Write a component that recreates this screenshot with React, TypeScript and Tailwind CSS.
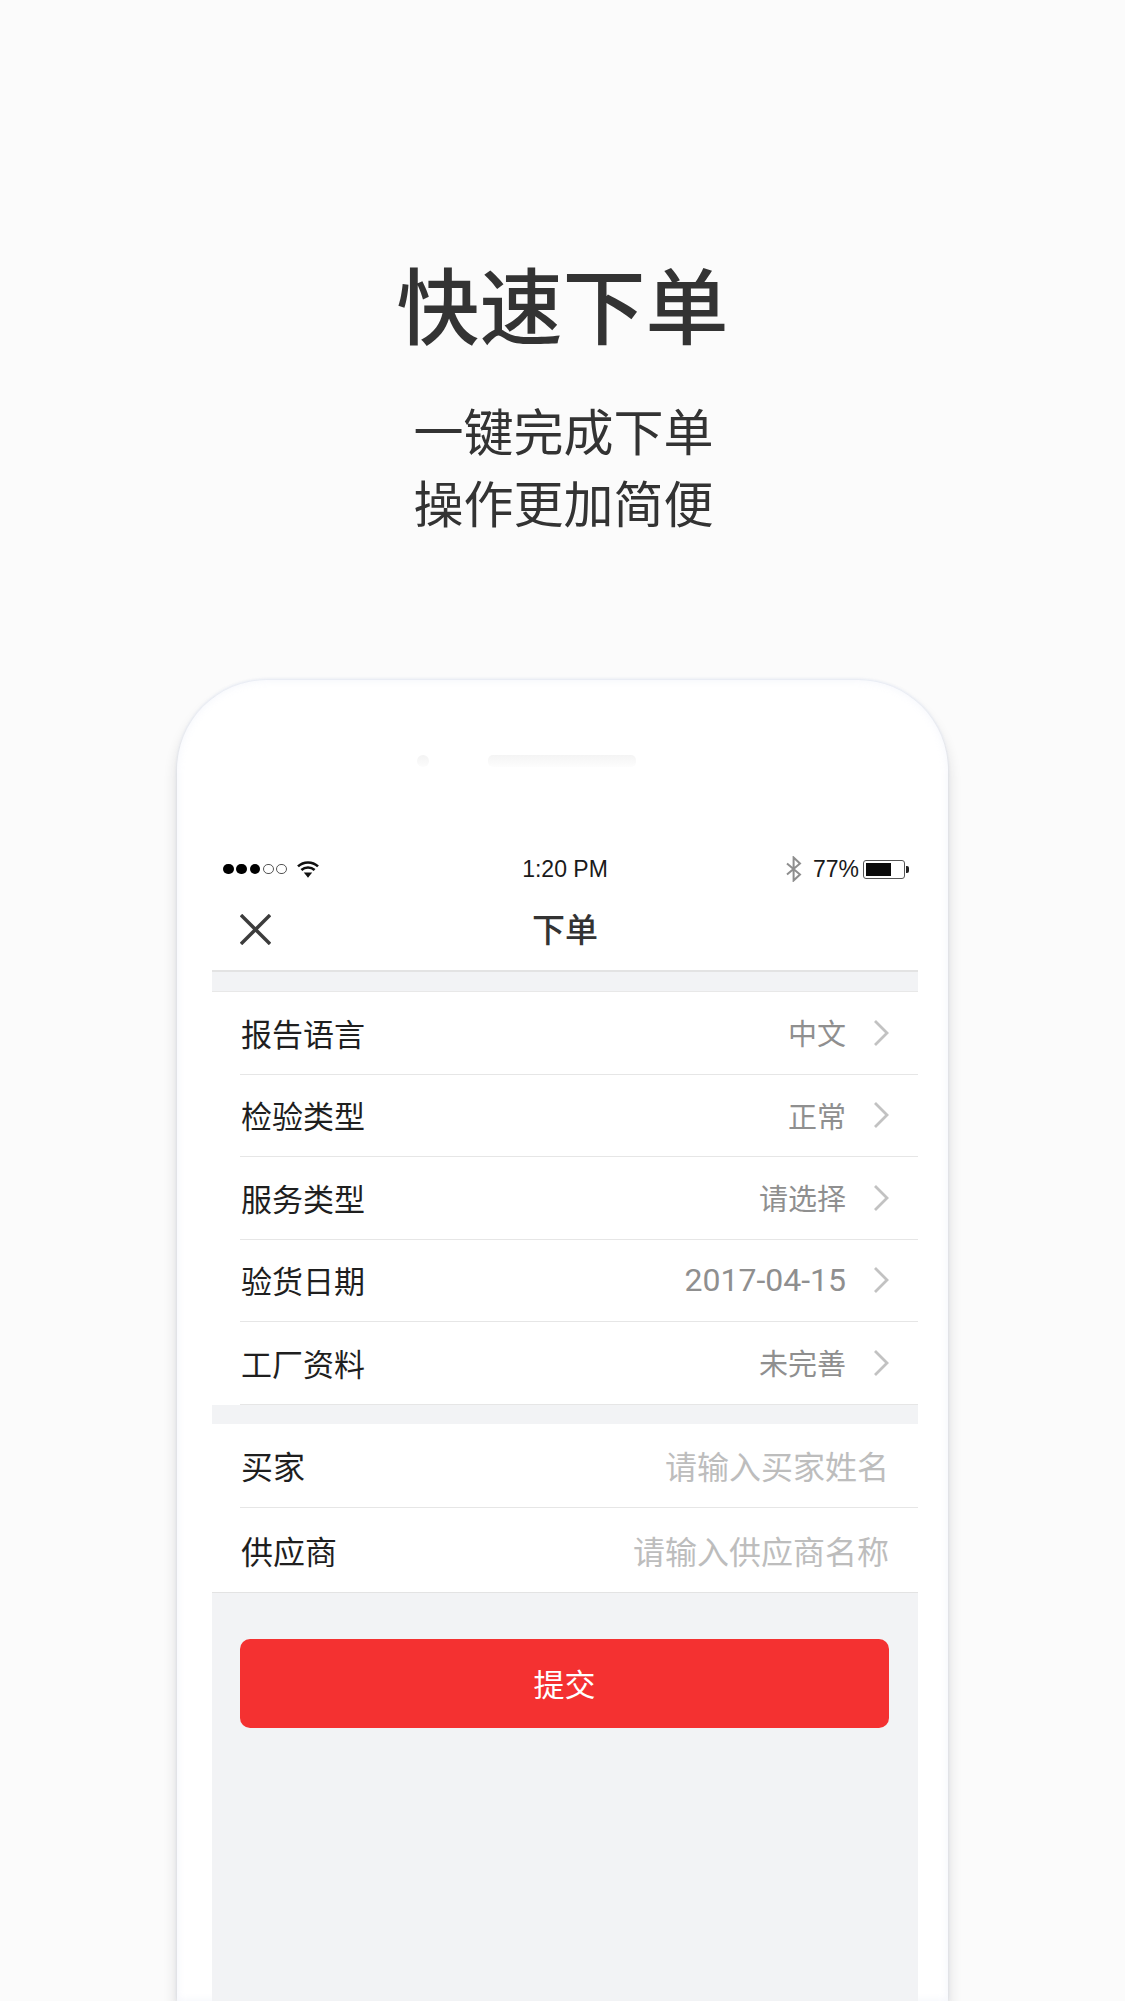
import React from 'react';

const cjk = "font-['Noto_Sans_CJK_SC',sans-serif]";

const selectRows = [
  { label: '报告语言', value: '中文' },
  { label: '检验类型', value: '正常' },
  { label: '服务类型', value: '请选择' },
  { label: '验货日期', value: '2017-04-15' },
  { label: '工厂资料', value: '未完善' },
];

const inputRows = [
  { label: '买家', hint: '请输入买家姓名' },
  { label: '供应商', hint: '请输入供应商名称' },
];

function Chevron() {
  return (
    <svg width="16" height="28" viewBox="0 0 16 28" fill="none" className="ml-[27px] shrink-0">
      <path d="M2 2l12 12L2 26" stroke="#c2c2c2" strokeWidth="2.8" />
    </svg>
  );
}

function StatusBar() {
  return (
    <div className="grid grid-cols-3 items-center h-[36px] pl-[11px] pr-[9px] text-[23px] text-[#1a1a1a] font-['Liberation_Sans',sans-serif]">
      <div className="flex items-center">
        <div className="flex gap-[2.6px]">
          <span className="w-[10.7px] h-[10.7px] rounded-full bg-black" />
          <span className="w-[10.7px] h-[10.7px] rounded-full bg-black" />
          <span className="w-[10.7px] h-[10.7px] rounded-full bg-black" />
          <span className="w-[10.7px] h-[10.7px] rounded-full border border-[#555]" />
          <span className="w-[10.7px] h-[10.7px] rounded-full border border-[#555]" />
        </div>
        <svg width="22" height="18" viewBox="0 0 22 18" fill="none" className="ml-[10px]">
          <path d="M1 6.4C6.6 1.1 15.4 1.1 21 6.4" stroke="#111" strokeWidth="2.6" />
          <path d="M4.4 10c3.7-3.4 9.5-3.4 13.2 0" stroke="#111" strokeWidth="2.6" />
          <path d="M6.8 12.4h8.4L11 17.8z" fill="#111" />
        </svg>
      </div>
      <div className="text-center -translate-x-px">1:20 PM</div>
      <div className="flex items-center justify-end">
        <svg width="16" height="26" viewBox="0 0 16 26" fill="none">
          <path d="M1 7.5l13 11L7.6 24.5v-23L14 7.5 1 18.5" stroke="#8e8e8e" strokeWidth="2" />
        </svg>
        <span className="ml-[11px] mr-[4px]">77%</span>
        <div className="w-[42px] h-[19px] rounded-[3px] border border-[#555] p-[2px] bg-white">
          <div className="w-[25px] h-full bg-[#0b0b0b]" />
        </div>
        <span className="w-[3px] h-[7px] ml-[1px] rounded-r-[2px] bg-[#222]" />
      </div>
    </div>
  );
}

export default function App() {
  return (
    <div className={`h-[2001px] overflow-hidden bg-[#fbfbfb] flex flex-col items-center ${cjk}`}>
      <h1 className="mt-[252px] text-[83px] leading-[100px] font-medium text-[#333]">快速下单</h1>
      <div className="mt-[41px] text-[50px] leading-[72px] text-[#333] text-center translate-x-px">
        <p>一键完成下单</p>
        <p>操作更加简便</p>
      </div>

      <div className="mt-[143px] w-[771px] flex-1 bg-white rounded-t-[90px] shadow-[0_10px_14px_rgba(30,30,40,0.16),0_-1px_3px_rgba(200,210,235,0.45),inset_0_0_8px_rgba(225,230,245,0.4)] pl-[35px] pr-[30px] flex flex-col">
        <div className="flex items-center gap-[59px] pt-[75px] pl-[205px]">
          <span className="w-[12px] h-[12px] rounded-full bg-linear-to-b from-[#f3f3f3] to-[#fcfcfc]" />
          <span className="w-[148px] h-[12px] rounded-[5px] bg-linear-to-b from-[#f4f4f4] to-[#fdfdfd]" />
        </div>

        <div className="mt-[84px]">
          <StatusBar />
        </div>

        <div className="relative h-[83px] flex items-center justify-center">
          <svg width="31" height="31" viewBox="0 0 31 31" fill="none" className="absolute left-[28px] top-[27px]">
            <path d="M1 1l29 29M30 1L1 30" stroke="#3c3c3c" strokeWidth="3.4" />
          </svg>
          <span className="text-[33px] font-medium text-[#333]">下单</span>
        </div>

        <div className="flex-1 bg-[#f2f3f5] border-t-2 border-[#e3e3e3]">
          <div className="mt-[19px] bg-white border-t border-[#e8e8e8]">
            {selectRows.map((row) => (
              <div key={row.label} className="pl-[28px]">
                <div className="h-[82.5px] pl-px flex items-center justify-between pr-[29px] border-b border-[#e6e6e6]">
                  <span className="text-[31px] text-[#1f1f1f]">{row.label}</span>
                  <span className={`flex items-center text-[#8f8f8f] ${row.value.startsWith('2017') ? "text-[32px] font-['Roboto',sans-serif]" : 'text-[29px]'}`}>
                    {row.value}
                    <Chevron />
                  </span>
                </div>
              </div>
            ))}
          </div>

          <div className="mt-[19px] bg-white border-b border-[#e3e3e3]">
            {inputRows.map((row, i) => (
              <div key={row.label} className="pl-[28px]">
                <div className={`h-[84px] pl-px flex items-center justify-between pr-[29px] ${i === 0 ? 'border-b border-[#e6e6e6]' : ''}`}>
                  <span className="text-[32px] text-[#1f1f1f]">{row.label}</span>
                  <span className="text-[32px] text-[#bdbdbd]">{row.hint}</span>
                </div>
              </div>
            ))}
          </div>

          <button className="block mt-[46px] mx-[28px] w-[649px] h-[89px] rounded-[10px] bg-[#f43131] text-[31px] text-white">
            提交
          </button>
        </div>
      </div>
    </div>
  );
}
